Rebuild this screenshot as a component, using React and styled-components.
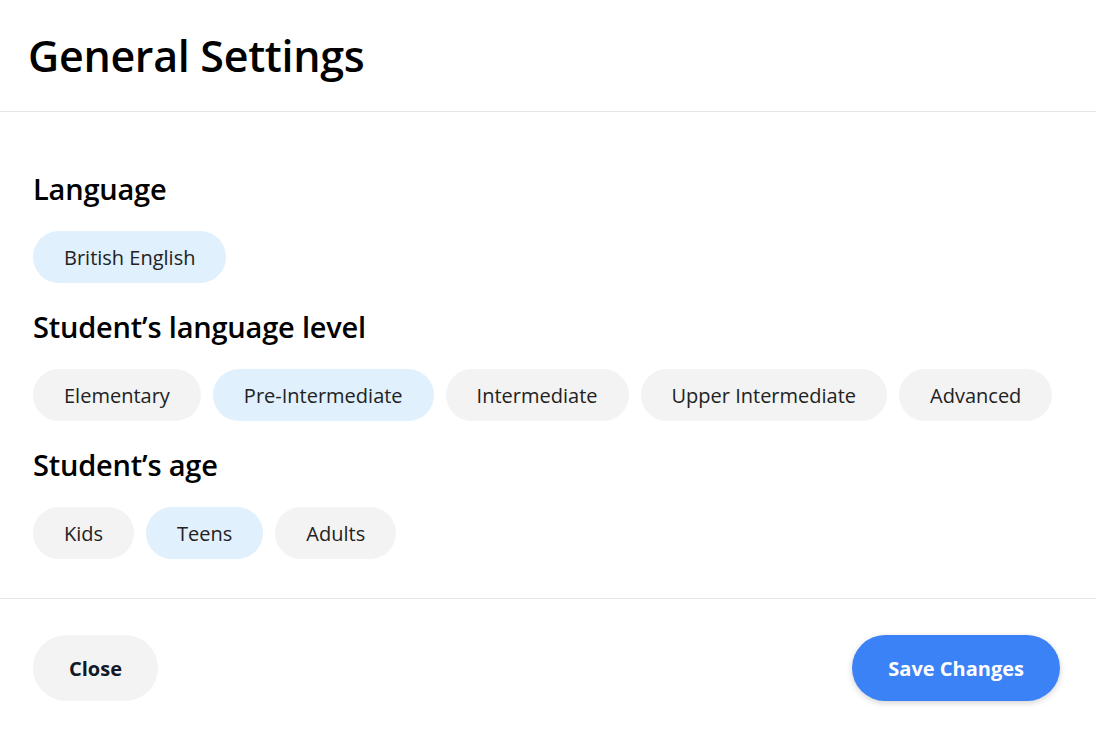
import React, { useState } from 'react';
import styled, { createGlobalStyle } from 'styled-components';

const GlobalStyle = createGlobalStyle`
  body {
    margin: 0;
    background: #ffffff;
    font-family: "Open Sans", "Noto Sans", sans-serif;
  }
`;

const Modal = styled.div`
  width: 100%;
  min-height: 741px;
  background: #ffffff;
  display: flex;
  flex-direction: column;
`;

const Header = styled.header`
  height: 111px;
  display: flex;
  align-items: center;
  padding: 0 28px;
  border-bottom: 1px solid #e5e5e5;
`;

const Title = styled.h1`
  margin: 0;
  font-size: 43px;
  font-weight: 600;
  color: #000000;
  letter-spacing: -0.3px;
`;

const Body = styled.div`
  padding: 59px 33px 39px;
  display: flex;
  flex-direction: column;
  gap: 26px;
  border-bottom: 1px solid #e5e5e5;
`;

const Section = styled.section`
  display: flex;
  flex-direction: column;
  gap: 24px;
`;

const SectionTitle = styled.h2`
  margin: 0;
  font-size: 29px;
  line-height: 36px;
  font-weight: 600;
  color: #000000;
  letter-spacing: -0.2px;
`;

const ChipRow = styled.div`
  display: flex;
  gap: 12px;
`;

const Chip = styled.button`
  height: 52px;
  padding: 0 31px;
  border: none;
  border-radius: 26px;
  background: ${(p) => (p.$active ? '#e0f0fd' : '#f3f3f3')};
  color: #222222;
  font-family: inherit;
  font-size: 20px;
  cursor: pointer;
`;

const Footer = styled.footer`
  display: flex;
  justify-content: space-between;
  align-items: center;
  padding: 36px 36px 36px 33px;
`;

const Button = styled.button`
  height: 66px;
  padding: 0 36px;
  border: none;
  border-radius: 33px;
  font-family: inherit;
  font-size: 20px;
  font-weight: 700;
  cursor: pointer;
  background: ${(p) => (p.$primary ? '#3b82f6' : '#f3f3f3')};
  color: ${(p) => (p.$primary ? '#ffffff' : '#111827')};
  box-shadow: ${(p) => (p.$primary ? '0 2px 6px rgba(0, 0, 0, 0.18)' : 'none')};
`;

const groups = [
  { title: 'Language', options: ['British English'], active: 'British English' },
  {
    title: 'Student’s language level',
    options: ['Elementary', 'Pre-Intermediate', 'Intermediate', 'Upper Intermediate', 'Advanced'],
    active: 'Pre-Intermediate',
  },
  { title: 'Student’s age', options: ['Kids', 'Teens', 'Adults'], active: 'Teens' },
];

const App = () => {
  const [selected, setSelected] = useState(() => groups.map((g) => g.active));

  const pick = (i, value) => {
    setSelected((prev) => prev.map((v, idx) => (idx === i ? value : v)));
  };

  return (
    <Modal>
      <GlobalStyle />
      <Header>
        <Title>General Settings</Title>
      </Header>
      <Body>
        {groups.map((group, i) => (
          <Section key={group.title}>
            <SectionTitle>{group.title}</SectionTitle>
            <ChipRow>
              {group.options.map((opt) => (
                <Chip key={opt} $active={selected[i] === opt} onClick={() => pick(i, opt)}>
                  {opt}
                </Chip>
              ))}
            </ChipRow>
          </Section>
        ))}
      </Body>
      <Footer>
        <Button>Close</Button>
        <Button $primary>Save Changes</Button>
      </Footer>
    </Modal>
  );
};

export default App;
